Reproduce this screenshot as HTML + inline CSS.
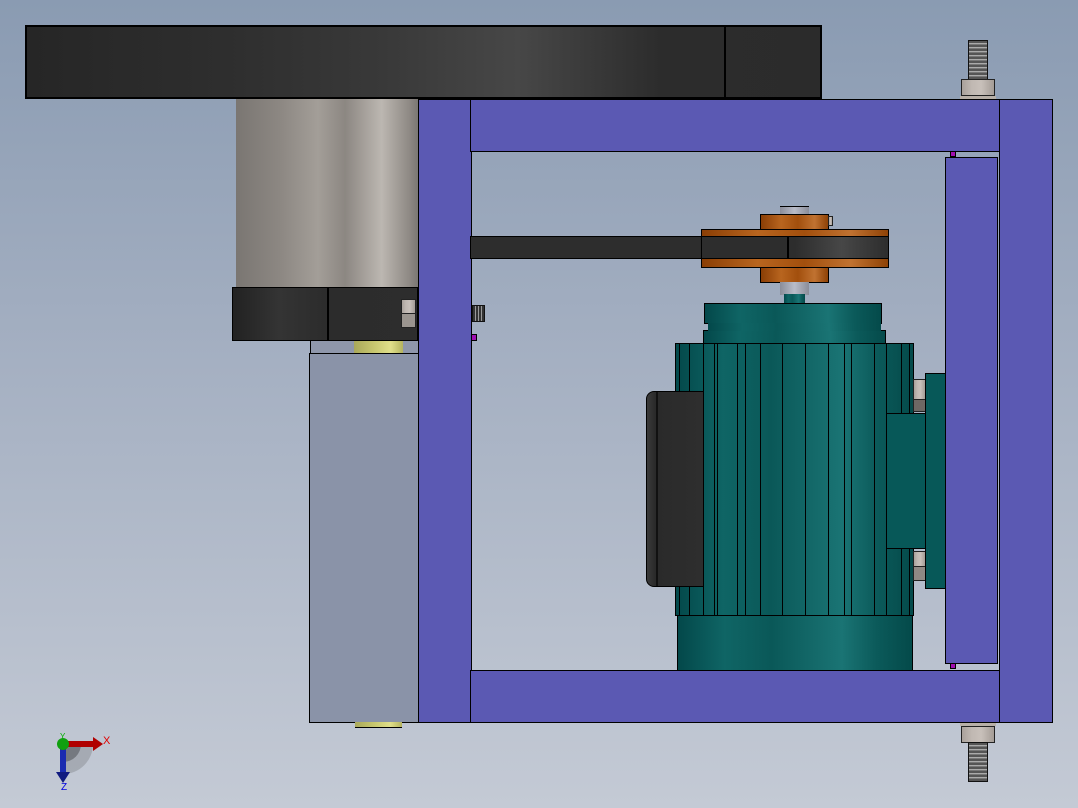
<!DOCTYPE html>
<html><head><style>
*{margin:0;padding:0;box-sizing:border-box}
body{width:1078px;height:808px;overflow:hidden;position:relative;background:linear-gradient(#8a9bb2 0%,#a5b0c2 45%,#c4cad5 100%);font-family:"Liberation Sans",sans-serif}
div{position:absolute}
.k{border:1.5px solid #000}
.p{background:#5b59b3;border:1.5px solid #000}
.teal{background:linear-gradient(90deg,#03484a 0%,#0f6565 20%,#0a5858 40%,#1a7474 70%,#0b5a5a 85%,#044a4a 100%)}
.org{background:linear-gradient(90deg,#8a3e05 0%,#b8651f 30%,#a24f0d 55%,#c07231 80%,#8e4206 100%);border:1.5px solid #000}
.nut{background:linear-gradient(90deg,#a9a19b 0%,#c0b8b2 30%,#c8c0ba 60%,#a49c96 100%);border:1px solid #222}
.stud{background:repeating-linear-gradient(#555 0 2px,#aaa 2px 3px,#777 3px 4px);border:1px solid #111}
.fin{background:#000;width:1px}
</style></head><body>
<div class="k" style="left:25px;top:25px;width:797px;height:74px;background:linear-gradient(90deg,#262626 0%,#2e2e2e 25%,#393939 45%,#474747 62%,#2c2c2c 80%,#2b2b2b 100%);border-width:2px"></div>
<div style="left:724px;top:26px;width:1.5px;height:72px;background:#000"></div>
<div style="left:236px;top:99px;width:182px;height:189px;background:linear-gradient(90deg,#7a7672 0%,#8d8883 25%,#a39e98 45%,#8c8782 60%,#bcb7b1 80%,#8f8a85 95%,#7b7773 100%)"></div>
<div class="k" style="left:232px;top:287px;width:186px;height:54px;background:linear-gradient(90deg,#222 0%,#343434 25%,#2c2c2c 50%,#2d2d2d 100%)"></div>
<div style="left:327px;top:288px;width:1.5px;height:52px;background:#000"></div>
<div class="nut" style="left:401px;top:299px;width:15px;height:15px"></div>
<div class="nut" style="left:401px;top:313px;width:15px;height:15px;background:#9b958f"></div>
<div class="k" style="left:310px;top:340px;width:109px;height:14px;background:#8f97ab;border-width:1px"></div>
<div style="left:354px;top:341px;width:49px;height:12px;background:linear-gradient(90deg,#a9a85a,#c7c66e 40%,#e0df8a 75%,#b4b35f)"></div>
<div class="k" style="left:309px;top:353px;width:110px;height:370px;background:#8a93a8"></div>
<div style="left:355px;top:722px;width:47px;height:6px;background:linear-gradient(90deg,#a9a85a,#c7c66e 40%,#e0df8a 75%,#b4b35f);border-bottom:1.5px solid #000"></div>
<div class="p" style="left:418px;top:99px;width:54px;height:624px"></div>
<div class="p" style="left:470px;top:99px;width:531px;height:53px"></div>
<div class="p" style="left:470px;top:670px;width:531px;height:53px"></div>
<div class="p" style="left:999px;top:99px;width:54px;height:624px"></div>
<div class="p" style="left:945px;top:157px;width:53px;height:507px"></div>
<div style="left:950px;top:151px;width:6px;height:6px;background:#a00fb0;border:1px solid #000"></div>
<div style="left:950px;top:663px;width:6px;height:6px;background:#a00fb0;border:1px solid #000"></div>
<div style="left:471px;top:334px;width:6px;height:7px;background:#a00fb0;border:1px solid #000"></div>
<div class="stud" style="left:472px;top:305px;width:13px;height:17px;background:repeating-linear-gradient(90deg,#333 0 2px,#999 2px 3px)"></div>
<div class="stud" style="left:968px;top:40px;width:20px;height:40px"></div>
<div class="nut" style="left:961px;top:79px;width:34px;height:17px"></div>
<div style="left:960px;top:96px;width:36px;height:3px;background:#b8b0a8"></div>
<div style="left:960px;top:723px;width:36px;height:3px;background:#b8b0a8"></div>
<div class="nut" style="left:961px;top:726px;width:34px;height:17px"></div>
<div class="stud" style="left:968px;top:742px;width:20px;height:40px"></div>
<div class="k" style="left:470px;top:236px;width:240px;height:23px;background:#2d2d2d"></div>
<div style="left:780px;top:206px;width:29px;height:9px;background:linear-gradient(90deg,#8a8d99,#b9bcc8 50%,#8a8d99);border-top:1px solid #000"></div>
<div class="org" style="left:760px;top:214px;width:69px;height:69px"></div>
<div class="nut" style="left:828px;top:216px;width:5px;height:10px"></div>
<div class="org" style="left:701px;top:229px;width:188px;height:39px"></div>
<div class="k" style="left:701px;top:236px;width:188px;height:23px;background:linear-gradient(90deg,#2d2d2d 0%,#2d2d2d 50%,#474747 75%,#2d2d2d 100%)"></div>
<div style="left:787px;top:237px;width:1.5px;height:21px;background:#000"></div>
<div style="left:780px;top:282px;width:29px;height:13px;background:linear-gradient(90deg,#8a8d99,#b9bcc8 50%,#8a8d99)"></div>
<div class="teal" style="left:784px;top:294px;width:21px;height:10px"></div>
<div class="teal k" style="left:704px;top:303px;width:178px;height:21px"></div>
<div class="teal k" style="left:703px;top:330px;width:183px;height:14px"></div>
<div class="teal" style="left:708px;top:323px;width:173px;height:8px"></div>
<div class="teal k" style="left:675px;top:343px;width:239px;height:273px"></div>
<div class="fin" style="left:679px;top:344px;height:271px"></div>
<div class="fin" style="left:689px;top:344px;height:271px"></div>
<div class="fin" style="left:703px;top:344px;height:271px"></div>
<div class="fin" style="left:714px;top:344px;height:271px"></div>
<div class="fin" style="left:717px;top:344px;height:271px"></div>
<div class="fin" style="left:737px;top:344px;height:271px"></div>
<div class="fin" style="left:745px;top:344px;height:271px"></div>
<div class="fin" style="left:760px;top:344px;height:271px"></div>
<div class="fin" style="left:782px;top:344px;height:271px"></div>
<div class="fin" style="left:805px;top:344px;height:271px"></div>
<div class="fin" style="left:828px;top:344px;height:271px"></div>
<div class="fin" style="left:844px;top:344px;height:271px"></div>
<div class="fin" style="left:851px;top:344px;height:271px"></div>
<div class="fin" style="left:874px;top:344px;height:271px"></div>
<div class="fin" style="left:886px;top:344px;height:271px"></div>
<div class="fin" style="left:901px;top:344px;height:271px"></div>
<div class="fin" style="left:909px;top:344px;height:271px"></div>
<div class="teal k" style="left:677px;top:615px;width:236px;height:56px"></div>
<div class="k" style="left:646px;top:391px;width:58px;height:196px;background:linear-gradient(90deg,#3a3a3a 0,#2a2a2a 8px,#2e2e2e 100%);border-radius:8px 0 0 8px"></div>
<div style="left:656px;top:392px;width:1.5px;height:194px;background:#111"></div>
<div class="k" style="left:886px;top:413px;width:40px;height:136px;background:#075858"></div>
<div class="nut" style="left:913px;top:379px;width:13px;height:21px"></div>
<div class="nut" style="left:913px;top:399px;width:13px;height:13px;background:#6e6864"></div>
<div class="nut" style="left:913px;top:551px;width:13px;height:16px"></div>
<div class="nut" style="left:913px;top:566px;width:13px;height:15px;background:#8f8984"></div>
<div class="k" style="left:925px;top:373px;width:21px;height:216px;background:#075858"></div>
<svg style="position:absolute;left:45px;top:728px" width="75" height="65">
<path d="M18 16 L48 16 A30 30 0 0 1 18 46 Z" fill="#8a8d94" opacity=".5"/>
<path d="M18 16 L36 16 A18 18 0 0 1 18 34 Z" fill="#55585e" opacity=".6"/>
<rect x="18" y="13" width="32" height="6" fill="#b00000"/>
<polygon points="48,9 58,16 48,23" fill="#b00000"/>
<rect x="15" y="16" width="6" height="30" fill="#1a2bb0"/>
<polygon points="11,44 18,55 25,44" fill="#101a80"/>
<circle cx="18" cy="16" r="6" fill="#10a010"/>
<text x="58" y="16" fill="#e00000" font-size="11" font-family="Liberation Sans">X</text>
<text x="16" y="62" fill="#0000e0" font-size="10" font-family="Liberation Sans">Z</text>
<text x="15" y="11" fill="#00b000" font-size="8" font-family="Liberation Sans">Y</text>
</svg>
</body></html>
